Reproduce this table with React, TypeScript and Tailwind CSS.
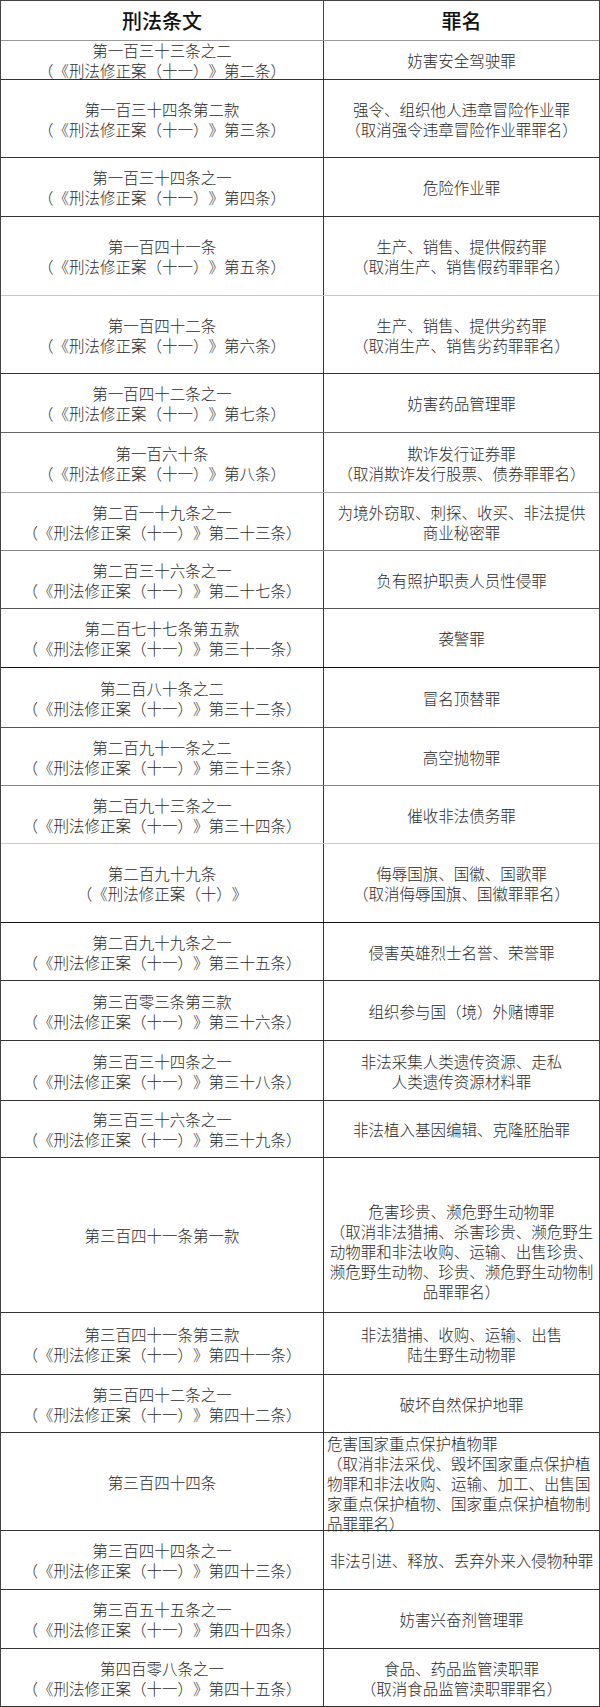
import React from 'react';

type Row = {
  h: string;
  law: string[];
  crime: string[];
  line?: string;
  crimeClass?: string;
};

const amend = (n: string) => `（《刑法修正案（十一）》第${n}条）`;

// heights include the bottom border of each row
const rows: Row[] = [
  { h: 'h-[39px]', law: ['第一百三十三条之二', amend('二')], crime: ['妨害安全驾驶罪'] },
  {
    h: 'h-[78px]',
    law: ['第一百三十四条第二款', amend('三')],
    crime: ['强令、组织他人违章冒险作业罪', '（取消强令违章冒险作业罪罪名）'],
  },
  { h: 'h-[59px]', law: ['第一百三十四条之一', amend('四')], crime: ['危险作业罪'] },
  {
    h: 'h-[79px]',
    law: ['第一百四十一条', amend('五')],
    crime: ['生产、销售、提供假药罪', '（取消生产、销售假药罪罪名）'],
    line: 'border-b-[#c8c8c8]',
  },
  {
    h: 'h-[78px]',
    law: ['第一百四十二条', amend('六')],
    crime: ['生产、销售、提供劣药罪', '（取消生产、销售劣药罪罪名）'],
  },
  { h: 'h-[59px]', law: ['第一百四十二条之一', amend('七')], crime: ['妨害药品管理罪'], line: 'border-b-[#666]' },
  {
    h: 'h-[60px]',
    law: ['第一百六十条', amend('八')],
    crime: ['欺诈发行证券罪', '（取消欺诈发行股票、债券罪罪名）'],
    line: 'border-b-[#aaa]',
  },
  {
    h: 'h-[58px]',
    law: ['第二百一十九条之一', amend('二十三')],
    crime: ['为境外窃取、刺探、收买、非法提供', '商业秘密罪'],
    line: 'border-b-[#888]',
  },
  { h: 'h-[58px]', law: ['第二百三十六条之一', amend('二十七')], crime: ['负有照护职责人员性侵罪'], line: 'border-b-[#555]' },
  { h: 'h-[59px]', law: ['第二百七十七条第五款', amend('三十一')], crime: ['袭警罪'], line: 'border-b-[#111]' },
  { h: 'h-[60px]', law: ['第二百八十条之二', amend('三十二')], crime: ['冒名顶替罪'], line: 'border-b-[#555]' },
  { h: 'h-[58px]', law: ['第二百九十一条之二', amend('三十三')], crime: ['高空抛物罪'], line: 'border-b-[#888]' },
  { h: 'h-[58px]', law: ['第二百九十三条之一', amend('三十四')], crime: ['催收非法债务罪'], line: 'border-b-[#ccc]' },
  {
    h: 'h-[79px]',
    law: ['第二百九十九条', '（《刑法修正案（十）》'],
    crime: ['侮辱国旗、国徽、国歌罪', '（取消侮辱国旗、国徽罪罪名）'],
    line: 'border-b-[#111]',
  },
  { h: 'h-[58px]', law: ['第二百九十九条之一', amend('三十五')], crime: ['侵害英雄烈士名誉、荣誉罪'] },
  { h: 'h-[60px]', law: ['第三百零三条第三款', amend('三十六')], crime: ['组织参与国（境）外赌博罪'] },
  {
    h: 'h-[60px]',
    law: ['第三百三十四条之一', amend('三十八')],
    crime: ['非法采集人类遗传资源、走私', '人类遗传资源材料罪'],
  },
  { h: 'h-[57px]', law: ['第三百三十六条之一', amend('三十九')], crime: ['非法植入基因编辑、克隆胚胎罪'] },
  {
    h: 'h-[155px]',
    law: ['第三百四十一条第一款'],
    crime: [
      '危害珍贵、濒危野生动物罪',
      '（取消非法猎捕、杀害珍贵、濒危野生',
      '动物罪和非法收购、运输、出售珍贵、',
      '濒危野生动物、珍贵、濒危野生动物制',
      '品罪罪名）',
    ],
    crimeClass: 'items-center pt-[32px] leading-[19.4px]',
  },
  {
    h: 'h-[62px]',
    law: ['第三百四十一条第三款', amend('四十一')],
    crime: ['非法猎捕、收购、运输、出售', '陆生野生动物罪'],
  },
  { h: 'h-[58px]', law: ['第三百四十二条之一', amend('四十二')], crime: ['破坏自然保护地罪'] },
  {
    h: 'h-[98px]',
    law: ['第三百四十四条'],
    crime: [
      '危害国家重点保护植物罪',
      '（取消非法采伐、毁坏国家重点保护植',
      '物罪和非法收购、运输、加工、出售国',
      '家重点保护植物、国家重点保护植物制',
      '品罪罪名）',
    ],
    crimeClass: 'items-start justify-start pl-[3px] leading-[19.2px]',
  },
  { h: 'h-[59px]', law: ['第三百四十四条之一', amend('四十三')], crime: ['非法引进、释放、丢弃外来入侵物种罪'] },
  { h: 'h-[59px]', law: ['第三百五十五条之一', amend('四十四')], crime: ['妨害兴奋剂管理罪'] },
  {
    h: 'h-[58px]',
    law: ['第四百零八条之一', amend('四十五')],
    crime: ['食品、药品监管渎职罪', '（取消食品监管渎职罪罪名）'],
  },
];

const Lines = ({ lines }: { lines: string[] }) => (
  <div>
    {lines.map((l, i) => (
      <div key={i} className="whitespace-nowrap">
        {l}
      </div>
    ))}
  </div>
);

export default function App() {
  return (
    <div className="w-[600px] bg-white text-[#2a2a2a] font-['Noto_Sans_CJK_SC',sans-serif] font-light [text-spacing-trim:space-all]">
      <div className="border-t border-l border-r border-[#444]">
        {/* header */}
        <div className="flex h-[40px] border-b border-[#999]">
          <div className="w-[323px] border-r border-[#444] flex items-center justify-center text-[20px] font-medium text-[#111]">
            刑法条文
          </div>
          <div className="flex-1 flex items-center justify-center text-[20px] font-medium text-[#111]">罪名</div>
        </div>

        {rows.map((r, i) => (
          <div key={i} className={`flex border-b border-[#333] ${r.h} ${r.line ?? ''}`}>
            <div className="w-[323px] border-r border-[#333] flex items-center justify-center text-center text-[15.5px] leading-[20px]">
              <Lines lines={r.law} />
            </div>
            <div
              className={`flex-1 flex text-center text-[15.5px] leading-[20px] ${
                r.crimeClass ?? 'items-center justify-center'
              }`}
            >
              <div className={r.crimeClass?.includes('justify-start') ? 'text-left' : 'w-full text-center'}>
                <Lines lines={r.crime} />
              </div>
            </div>
          </div>
        ))}
      </div>
    </div>
  );
}
